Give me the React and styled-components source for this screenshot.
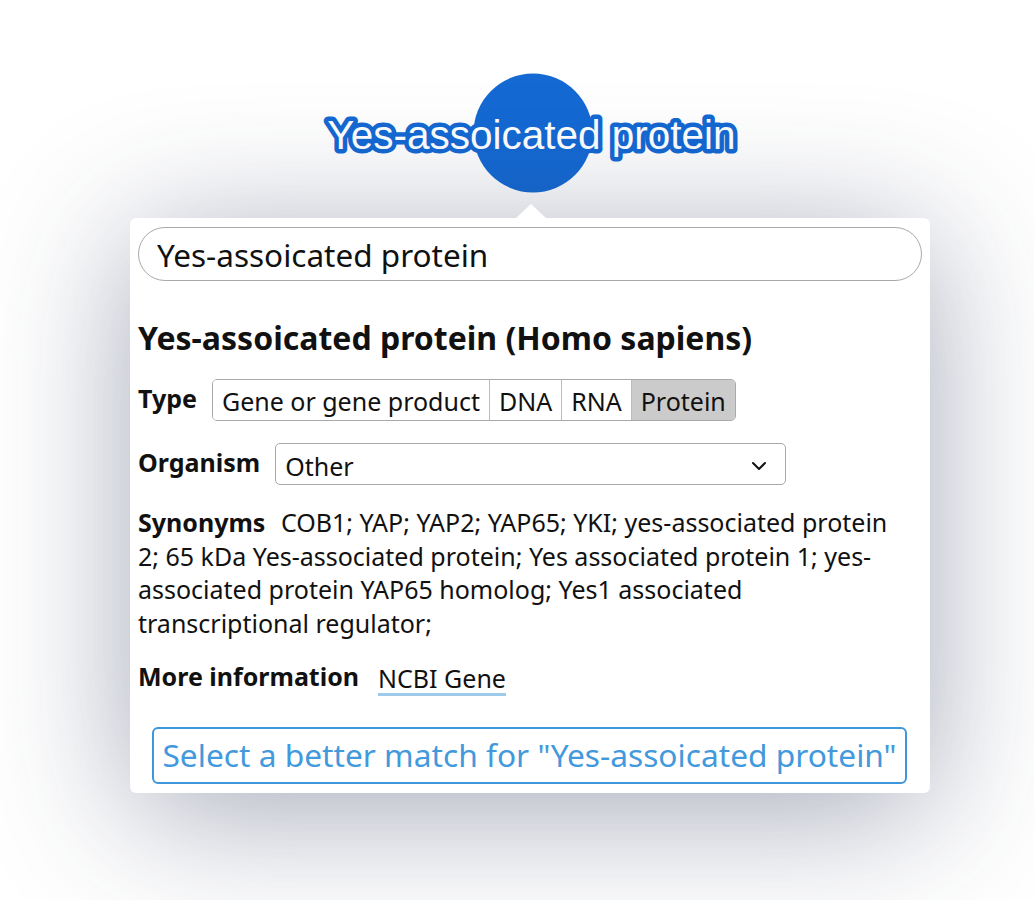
import React, { useState } from "react";
import styled, { createGlobalStyle } from "styled-components";

const GlobalStyle = createGlobalStyle`
  html, body {
    margin: 0;
    padding: 0;
    background: #fff;
  }
  body {
    font-family: "Noto Sans", "Open Sans", sans-serif;
    color: #111;
  }
`;

const Page = styled.div`
  width: 1034px;
  height: 900px;
  overflow: hidden;
  padding: 73px 0 0 130px;
  box-sizing: border-box;
`;

const NodeWrap = styled.div`
  width: 440px;
  height: 120px;
  margin-left: 183px;
`;

const Popup = styled.div`
  position: relative;
  width: 800px;
  margin-top: 25px;
  background: #fff;
  border-radius: 6px;
  padding: 9px 8px 9px 8px;
  box-sizing: border-box;
  box-shadow: 0 20px 140px rgba(40, 50, 85, 0.42);
  &::before {
    content: "";
    position: absolute;
    top: -14px;
    left: 386px;
    border-left: 15px solid transparent;
    border-right: 15px solid transparent;
    border-bottom: 14px solid #fff;
  }
`;

const SearchInput = styled.input`
  display: block;
  width: 100%;
  box-sizing: border-box;
  height: 54px;
  border: 1.5px solid #a9a9a9;
  border-radius: 27px;
  padding: 0 18px;
  font-family: "Noto Sans", sans-serif;
  font-size: 31.5px;
  color: #111;
  outline: none;
  background: #fff;
`;

const Title = styled.h2`
  margin: 38px 0 0;
  font-size: 32px;
  line-height: 38px;
  font-weight: 700;
  white-space: nowrap;
`;

const Row = styled.div`
  display: flex;
  align-items: center;
  gap: ${(p) => p.gap || 14}px;
  margin-top: ${(p) => p.mt || 0}px;
`;

const Label = styled.span`
  font-weight: 700;
  font-size: 25px;
  line-height: 34px;
  position: relative;
  top: -2px;
`;

const Segments = styled.div`
  display: flex;
  border: 1px solid #a9a9a9;
  border-radius: 5px;
  overflow: hidden;
  height: 42px;
  box-sizing: border-box;
`;

const Segment = styled.button`
  font-family: "Noto Sans", sans-serif;
  font-size: 25px;
  color: #111;
  background: ${(p) => (p.active ? "#cbcbcb" : "#fff")};
  border: none;
  border-left: ${(p) => (p.first ? "none" : "1px solid #bdbdbd")};
  padding: 2px 9px 0;
  margin: 0;
  line-height: 38px;
  cursor: pointer;
  white-space: nowrap;
`;

const Select = styled.div`
  width: 511px;
  height: 42px;
  box-sizing: border-box;
  border: 1px solid #a9a9a9;
  border-radius: 5px;
  display: flex;
  align-items: center;
  justify-content: space-between;
  padding: 3px 18px 0 9px;
  font-size: 25px;
`;

const Para = styled.p`
  margin: 21px 0 0;
  padding-right: 12px;
  font-size: 25px;
  line-height: 33.7px;
  b {
    font-weight: 700;
    margin-right: 9px;
  }
`;

const Link = styled.a`
  font-size: 25px;
  color: #111;
  text-decoration: none;
  border-bottom: 3px solid #9ecaec;
  line-height: 30px;
  margin-top: 3px;
`;

const MatchButton = styled.button`
  display: block;
  width: calc(100% - 29px);
  margin: 31px 0 0 14px;
  height: 57px;
  box-sizing: border-box;
  border: 2px solid #3f97db;
  border-radius: 6px;
  background: #fff;
  color: #4299dc;
  font-family: "Noto Sans", sans-serif;
  font-size: 31.7px;
  padding: 0 0 2px;
  cursor: pointer;
  white-space: nowrap;
`;

const Node = () => (
  <svg width="440" height="120" viewBox="0 0 440 120">
    <circle cx="220" cy="60" r="59.5" fill="#1469d3" />
    <text
      x="218.5"
      y="76"
      textAnchor="middle"
      fontFamily="'Liberation Sans', Arial, sans-serif"
      fontSize="40.5"
      fill="#fff"
      stroke="#1469d3"
      strokeWidth="9"
      strokeLinejoin="round"
      paintOrder="stroke"
    >
      Yes-assoicated protein
    </text>
  </svg>
);

const Chevron = () => (
  <svg width="16" height="10" viewBox="0 0 16 10">
    <path d="M2 2 L8 8 L14 2" fill="none" stroke="#111" strokeWidth="2" strokeLinecap="round" strokeLinejoin="round" />
  </svg>
);

const types = ["Gene or gene product", "DNA", "RNA", "Protein"];

export default function App() {
  const [name, setName] = useState("Yes-assoicated protein");
  const [type, setType] = useState("Protein");

  return (
    <>
      <GlobalStyle />
      <Page>
        <NodeWrap>
          <Node />
        </NodeWrap>
        <Popup>
          <SearchInput value={name} onChange={(e) => setName(e.target.value)} />
          <Title>Yes-assoicated protein (Homo sapiens)</Title>
          <Row mt={22} gap={15}>
            <Label>Type</Label>
            <Segments>
              {types.map((t, i) => (
                <Segment key={t} first={i === 0} active={type === t} onClick={() => setType(t)}>
                  {t}
                </Segment>
              ))}
            </Segments>
          </Row>
          <Row mt={22} gap={15}>
            <Label>Organism</Label>
            <Select>
              <span>Other</span>
              <Chevron />
            </Select>
          </Row>
          <Para>
            <b>Synonyms</b> COB1; YAP; YAP2; YAP65; YKI; yes-associated protein 2; 65 kDa Yes-associated protein; Yes associated protein 1; yes-associated protein YAP65 homolog; Yes1 associated transcriptional regulator;
          </Para>
          <Row mt={19} gap={19}>
            <Label>More information</Label>
            <Link href="#">NCBI Gene</Link>
          </Row>
          <MatchButton>Select a better match for "Yes-assoicated protein"</MatchButton>
        </Popup>
      </Page>
    </>
  );
}
